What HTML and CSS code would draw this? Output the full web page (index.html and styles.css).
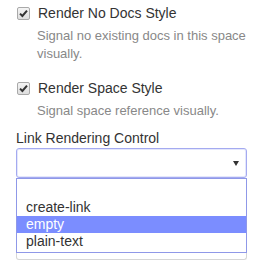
FILE: index.html
```html
<!DOCTYPE html>
<html lang="en">
  <head>
    <meta charset="UTF-8" />
    <title>Link Rendering Settings</title>
    <link rel="stylesheet" href="styles.css">
  </head>
  <body>
    <div class="settings">
      <div class="option">
        <label class="option__label">
          <span class="check">
            <svg width="9" height="9" viewBox="0 0 9 9"><path d="M1 4.6 L3.4 7 L8 1.6" fill="none" stroke="#333" stroke-width="2"/></svg>
          </span>
          Render No Docs Style
        </label>
        <p class="option__help">Signal no existing docs in this space visually.</p>
      </div>

      <div class="option">
        <label class="option__label">
          <span class="check">
            <svg width="9" height="9" viewBox="0 0 9 9"><path d="M1 4.6 L3.4 7 L8 1.6" fill="none" stroke="#333" stroke-width="2"/></svg>
          </span>
          Render Space Style
        </label>
        <p class="option__help">Signal space reference visually.</p>
      </div>

      <div class="field">
        <div class="field__label">Link Rendering Control</div>
        <div class="select">
          <span class="select__arrow"></span>
        </div>
        <div class="dropdown">
          <ul class="dropdown__list">
            <li class="dropdown__item">&nbsp;</li>
            <li class="dropdown__item">create-link</li>
            <li class="dropdown__item dropdown__item--active">empty</li>
            <li class="dropdown__item">plain-text</li>
          </ul>
        </div>
      </div>
    </div>
  </body>
</html>
```

FILE: styles.css
```css
body {
  margin: 0;
  padding: 3px 13px 0 16px;
  font-family: "Liberation Sans", Arial, sans-serif;
  color: #333;
  background: #fff;
}

.option {
  margin-bottom: 15px;
}

.option__label {
  display: flex;
  align-items: center;
  gap: 8px;
  font-size: 14px;
  line-height: 20px;
}

.check {
  display: flex;
  align-items: center;
  justify-content: center;
  width: 11px;
  height: 11px;
  margin-left: 1px;
  border: 1px solid #a9a9a9;
  border-radius: 2px;
  background: linear-gradient(#f4f4f4, #dedede);
}

.option__help {
  margin: 4px 0 0 21px;
  font-size: 13px;
  line-height: 18px;
  color: #888;
}

.field {
  margin-top: -7px;
}

.field__label {
  font-size: 14px;
  line-height: 20px;
}

.select {
  position: relative;
  height: 28px;
  border: 1px solid #a4aaf0;
  border-radius: 3px;
  box-shadow: inset 0 0 0 1px #e4e7fc;
}

.select__arrow {
  position: absolute;
  right: 7px;
  top: 12px;
  border-left: 3px solid transparent;
  border-right: 3px solid transparent;
  border-top: 5px solid #333;
}

.dropdown {
  height: 81px;
  border: 1px solid #d6d6d6;
  border-top: none;
  border-radius: 0 0 3px 3px;
}

.dropdown__list {
  list-style: none;
  margin: 0 -1px;
  padding: 3px 0 2px;
  border: 1px solid #8f98e8;
  background: #fff;
}

.dropdown__item {
  height: 17px;
  padding-left: 9px;
  font-size: 14px;
  line-height: 17px;
  color: #333;
}

.dropdown__item--active {
  background: #7b8dff;
  color: #fff;
}
```
